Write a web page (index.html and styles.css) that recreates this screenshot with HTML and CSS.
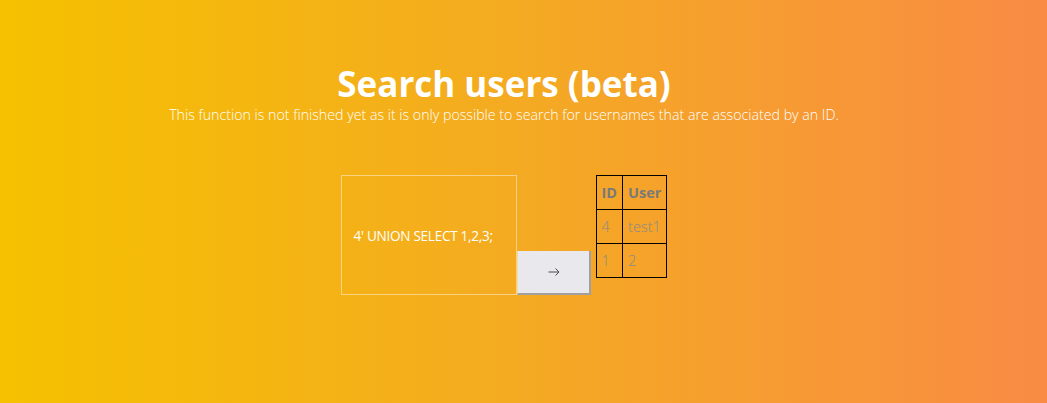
FILE: index.html
```html
<!DOCTYPE html>
<html>
<head>
<meta charset="utf-8">
<link rel="stylesheet" href="styles.css">
</head>
<body>
<div class="page">
  <h1 class="title">Search users (beta)</h1>
  <p class="subtitle">This function is not finished yet as it is only possible to search for usernames that are associated by an ID.</p>
  <div class="search">
    <div class="field">4' UNION SELECT 1,2,3;</div>
    <button class="go" aria-label="Search"><svg class="arrow" width="12" height="10" viewBox="0 0 12 10"><path d="M0.5 5H11M7.5 1.5L11 5L7.5 8.5" fill="none" stroke="#4a4a4a" stroke-width="1"/></svg></button>
    <table class="results">
      <tr><th>ID</th><th>User</th></tr>
      <tr><td>4</td><td>test1</td></tr>
      <tr><td>1</td><td>2</td></tr>
    </table>
  </div>
</div>
</body>
</html>
```
FILE: styles.css
```css
html, body {
  margin: 0;
  padding: 0;
  height: 100%;
}
body {
  background: linear-gradient(to right, #f5c100 0%, #f4aa22 50%, #f98b44 100%);
  font-family: "Open Sans", "Liberation Sans", sans-serif;
  color: #fff;
}
.page {
  display: flex;
  flex-direction: column;
  align-items: center;
  padding-top: 62px;
  padding-right: 39px;
}
.title {
  margin: 0;
  font-size: 35px;
  font-weight: 700;
  line-height: 44px;
}
.subtitle {
  margin: 0;
  font-size: 14.2px;
  font-weight: 300;
  line-height: 18px;
}
.search {
  display: flex;
  align-items: flex-start;
  margin-top: 51px;
}
.field {
  box-sizing: border-box;
  width: 176px;
  height: 120px;
  border: 1px solid rgba(255, 255, 255, 0.45);
  display: flex;
  align-items: center;
  padding-left: 12px;
  font-size: 13.6px;
  letter-spacing: -0.3px;
  color: #fff;
}
.go {
  box-sizing: border-box;
  align-self: flex-end;
  width: 74px;
  height: 44px;
  margin: 0;
  background: #e9e9ed;
  border: none;
  border-left: 1px solid #f4d9a0;
  border-right: 2px solid #a0a0a0;
  border-bottom: 2px solid #a0a0a0;
  padding: 0 0 0 1px;
  display: flex;
  align-items: center;
  justify-content: center;
}
.arrow {
  display: block;
}
.results {
  margin-left: 5px;
  border-collapse: collapse;
  color: #7a7a7a;
  font-size: 14.5px;
}
.results th, .results td {
  border: 1px solid #000;
  height: 33px;
  padding: 0 5px;
  text-align: left;
}
.results th {
  font-weight: 700;
}
.results td {
  font-weight: 300;
  color: #8a8a8a;
}
```
